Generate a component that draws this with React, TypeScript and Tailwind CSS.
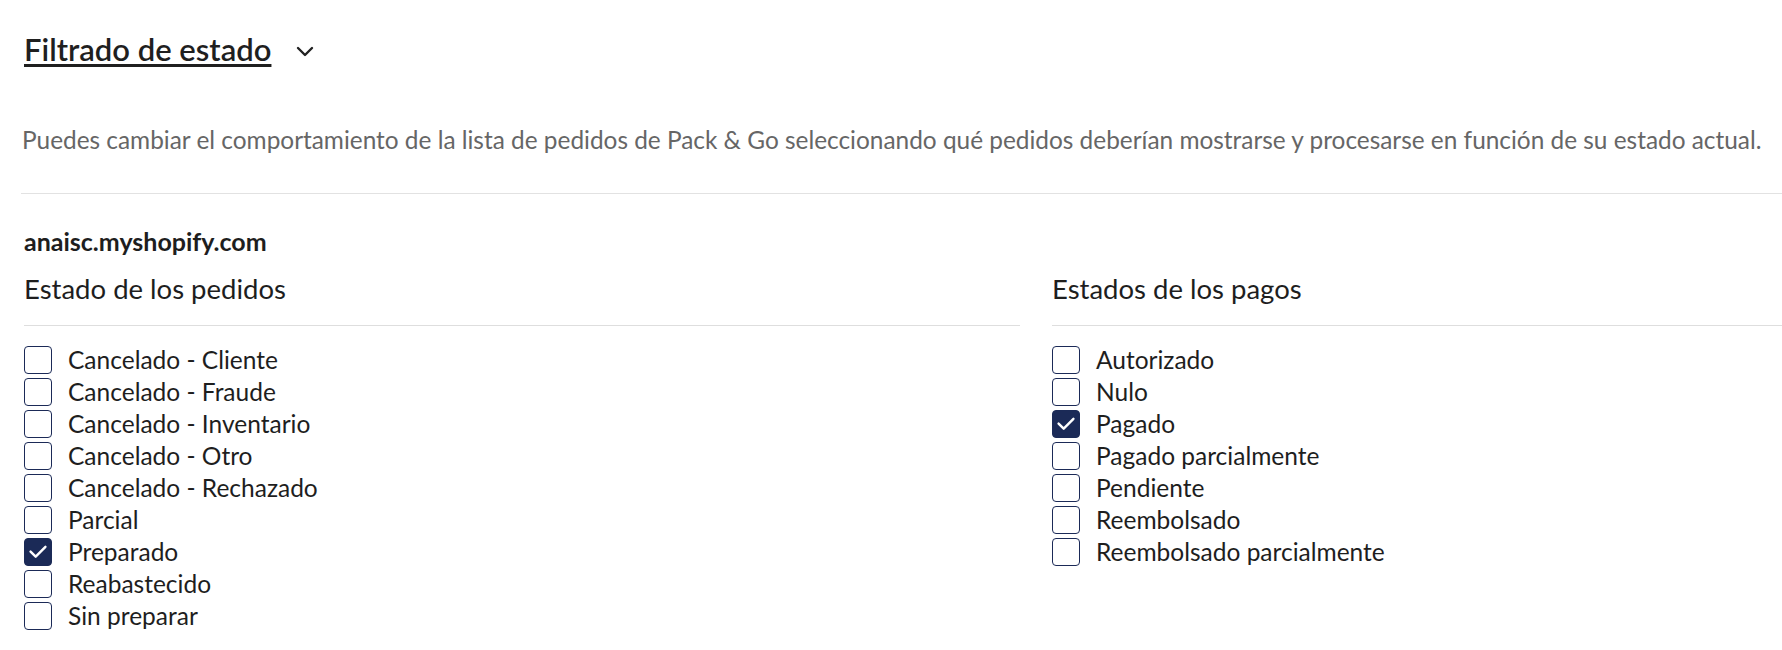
import React from "react";

const orderStates = [
  { label: "Cancelado - Cliente", checked: false },
  { label: "Cancelado - Fraude", checked: false },
  { label: "Cancelado - Inventario", checked: false },
  { label: "Cancelado - Otro", checked: false },
  { label: "Cancelado - Rechazado", checked: false },
  { label: "Parcial", checked: false },
  { label: "Preparado", checked: true },
  { label: "Reabastecido", checked: false },
  { label: "Sin preparar", checked: false },
];

const paymentStates = [
  { label: "Autorizado", checked: false },
  { label: "Nulo", checked: false },
  { label: "Pagado", checked: true },
  { label: "Pagado parcialmente", checked: false },
  { label: "Pendiente", checked: false },
  { label: "Reembolsado", checked: false },
  { label: "Reembolsado parcialmente", checked: false },
];

function Checkbox({ checked }: { checked: boolean }) {
  return checked ? (
    <span className="flex h-[28px] w-[28px] shrink-0 items-center justify-center rounded-[4px] border-[1.5px] border-[#1b2a57] bg-[#1b2a57]">
      <svg width="28" height="28" viewBox="0 0 28 28" fill="none">
        <path
          d="M6 13.5 L11.5 19 L22 8.5"
          stroke="white"
          strokeWidth="2.6"
          strokeLinecap="round"
          strokeLinejoin="round"
        />
      </svg>
    </span>
  ) : (
    <span className="block h-[28px] w-[28px] shrink-0 rounded-[4px] border-[1.5px] border-[#1b2a57] bg-white" />
  );
}

function Group({
  title,
  items,
}: {
  title: string;
  items: { label: string; checked: boolean }[];
}) {
  return (
    <div className="flex flex-col">
      <h3 className="text-[27.5px] leading-[34px] font-normal text-[#1e1e1e]">{title}</h3>
      <div className="mt-[19px] h-px w-full bg-[#dedede]" />
      <ul className="mt-[20px] flex flex-col gap-[4px]">
        {items.map((it) => (
          <li key={it.label} className="flex h-[28px] items-center gap-[16px]">
            <Checkbox checked={it.checked} />
            <span className="text-[24.5px] leading-[28px] text-[#1e1e1e]">{it.label}</span>
          </li>
        ))}
      </ul>
    </div>
  );
}

export default function App() {
  return (
    <div className="min-h-[650px] w-full bg-white font-['Lato',sans-serif] text-[#1e1e1e]">
      <div className="pl-6 pt-[30px]">
        <div className="flex items-center">
          <h2 className="text-[31px] leading-[38px] font-semibold text-[#1f1f1f] underline decoration-[3px] underline-offset-[3px]">
            Filtrado de estado
          </h2>
          <svg
            className="ml-[25px] mt-[4px]"
            width="18"
            height="11"
            viewBox="0 0 18 11"
            fill="none"
          >
            <path
              d="M2 2 L9 9 L16 2"
              stroke="#222222"
              strokeWidth="2.4"
              strokeLinecap="round"
              strokeLinejoin="round"
            />
          </svg>
        </div>
        <p className="mt-[56px] -ml-[2px] text-[24.4px] leading-[32px] text-[#666666]">
          Puedes cambiar el comportamiento de la lista de pedidos de Pack &amp; Go seleccionando qué
          pedidos deberían mostrarse y procesarse en función de su estado actual.
        </p>
      </div>
      <div className="ml-[21px] mt-[37px] h-px bg-[#e2e2e2]" />
      <div className="pl-6 pt-[33px]">
        <div className="text-[25px] leading-[29px] font-bold text-[#1e1e1e]">anaisc.myshopify.com</div>
        <div className="mt-[16px] grid grid-cols-[996px_1fr] gap-8">
          <Group title="Estado de los pedidos" items={orderStates} />
          <Group title="Estados de los pagos" items={paymentStates} />
        </div>
      </div>
    </div>
  );
}
